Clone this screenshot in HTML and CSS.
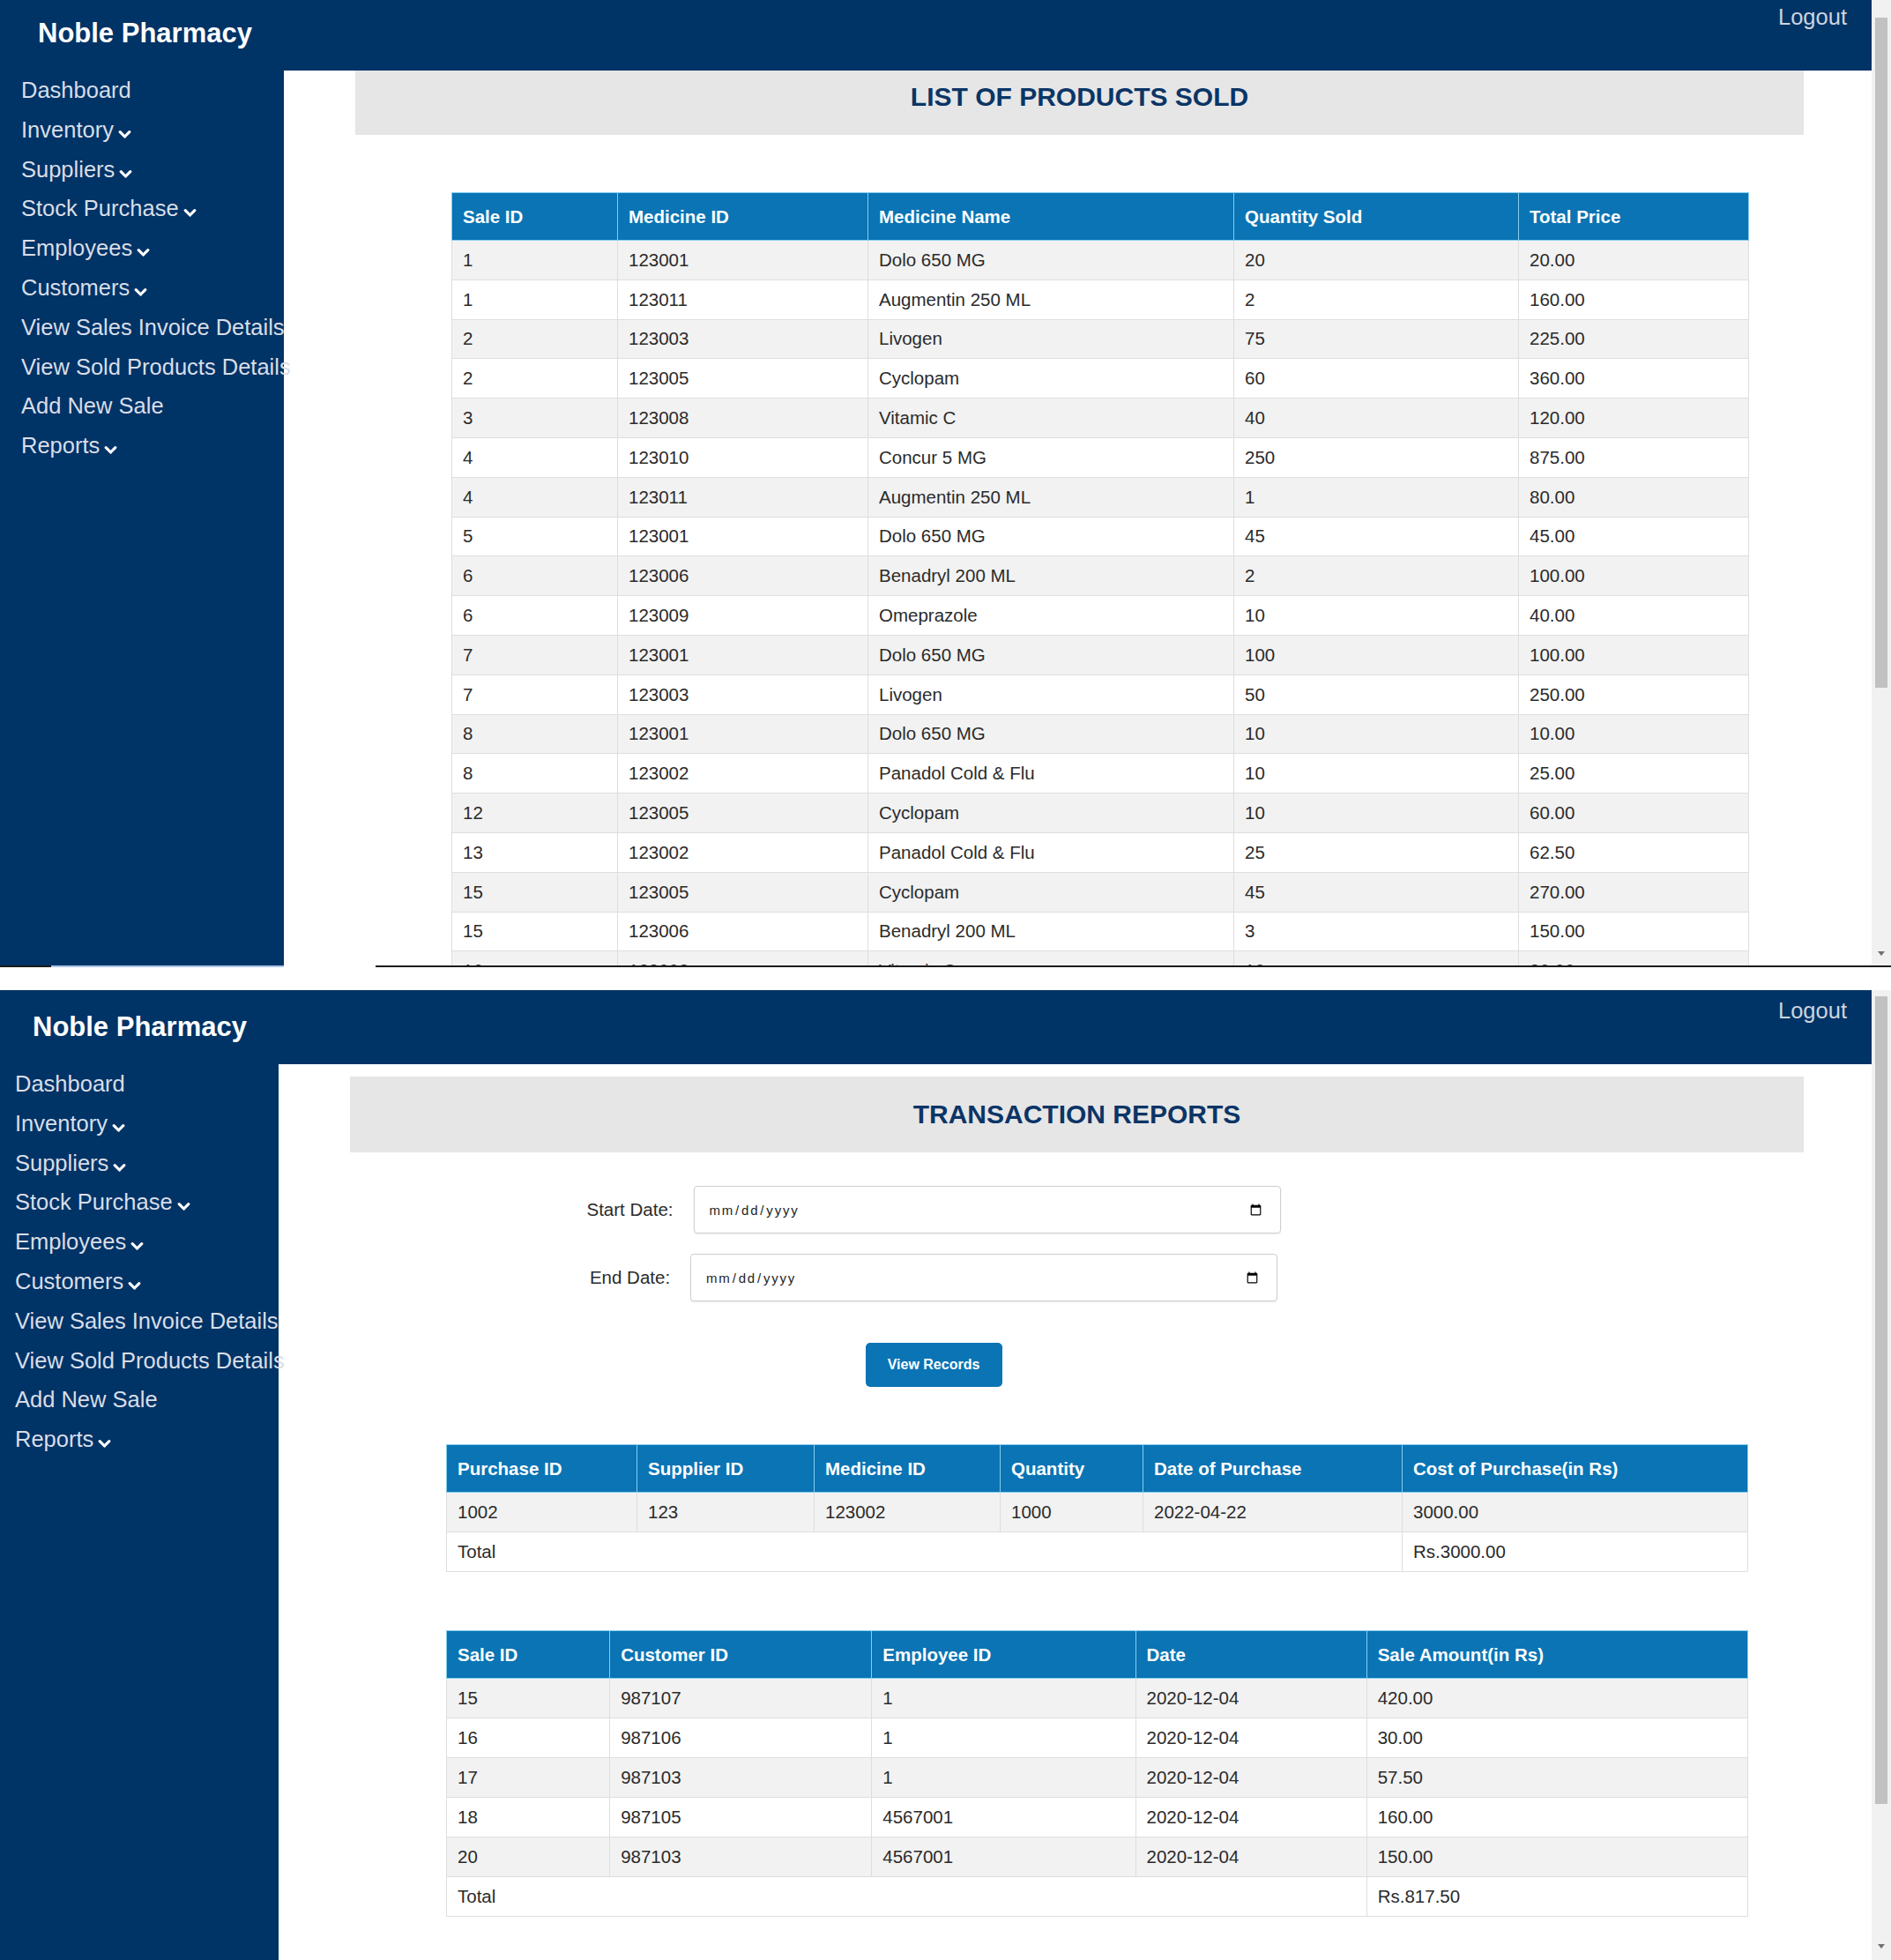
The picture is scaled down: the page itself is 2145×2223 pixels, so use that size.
FILE: index.html
```html
<!DOCTYPE html>
<html lang="en">
<head>
<meta charset="utf-8">
<title>Noble Pharmacy</title>
<link rel="stylesheet" href="styles.css">
</head>
<body>

<section class="shot shot-top">
  <div class="screen">
    <header class="topbar">
      <div class="brand">Noble Pharmacy</div>
      <a class="logout">Logout</a>
    </header>
    <div class="body">
      <nav class="sidebar">
        <a class="nav-item">Dashboard</a>
        <a class="nav-item">Inventory<svg class="chev" viewBox="0 0 15 11"><path d="M2.2 2.6 L7.5 8 L12.8 2.6"/></svg></a>
        <a class="nav-item">Suppliers<svg class="chev" viewBox="0 0 15 11"><path d="M2.2 2.6 L7.5 8 L12.8 2.6"/></svg></a>
        <a class="nav-item">Stock Purchase<svg class="chev" viewBox="0 0 15 11"><path d="M2.2 2.6 L7.5 8 L12.8 2.6"/></svg></a>
        <a class="nav-item">Employees<svg class="chev" viewBox="0 0 15 11"><path d="M2.2 2.6 L7.5 8 L12.8 2.6"/></svg></a>
        <a class="nav-item">Customers<svg class="chev" viewBox="0 0 15 11"><path d="M2.2 2.6 L7.5 8 L12.8 2.6"/></svg></a>
        <a class="nav-item">View Sales Invoice Details</a>
        <a class="nav-item">View Sold Products Details</a>
        <a class="nav-item">Add New Sale</a>
        <a class="nav-item">Reports<svg class="chev" viewBox="0 0 15 11"><path d="M2.2 2.6 L7.5 8 L12.8 2.6"/></svg></a>
      </nav>
      <main class="main">
        <div class="title-box">LIST OF PRODUCTS SOLD</div>
        <div class="tables">
          <table class="data t-sold">
            <colgroup><col><col><col><col><col></colgroup>
            <thead>
              <tr><th>Sale ID</th><th>Medicine ID</th><th>Medicine Name</th><th>Quantity Sold</th><th>Total Price</th></tr>
            </thead>
            <tbody>
              <tr><td>1</td><td>123001</td><td>Dolo 650 MG</td><td>20</td><td>20.00</td></tr>
              <tr><td>1</td><td>123011</td><td>Augmentin 250 ML</td><td>2</td><td>160.00</td></tr>
              <tr><td>2</td><td>123003</td><td>Livogen</td><td>75</td><td>225.00</td></tr>
              <tr><td>2</td><td>123005</td><td>Cyclopam</td><td>60</td><td>360.00</td></tr>
              <tr><td>3</td><td>123008</td><td>Vitamic C</td><td>40</td><td>120.00</td></tr>
              <tr><td>4</td><td>123010</td><td>Concur 5 MG</td><td>250</td><td>875.00</td></tr>
              <tr><td>4</td><td>123011</td><td>Augmentin 250 ML</td><td>1</td><td>80.00</td></tr>
              <tr><td>5</td><td>123001</td><td>Dolo 650 MG</td><td>45</td><td>45.00</td></tr>
              <tr><td>6</td><td>123006</td><td>Benadryl 200 ML</td><td>2</td><td>100.00</td></tr>
              <tr><td>6</td><td>123009</td><td>Omeprazole</td><td>10</td><td>40.00</td></tr>
              <tr><td>7</td><td>123001</td><td>Dolo 650 MG</td><td>100</td><td>100.00</td></tr>
              <tr><td>7</td><td>123003</td><td>Livogen</td><td>50</td><td>250.00</td></tr>
              <tr><td>8</td><td>123001</td><td>Dolo 650 MG</td><td>10</td><td>10.00</td></tr>
              <tr><td>8</td><td>123002</td><td>Panadol Cold &amp; Flu</td><td>10</td><td>25.00</td></tr>
              <tr><td>12</td><td>123005</td><td>Cyclopam</td><td>10</td><td>60.00</td></tr>
              <tr><td>13</td><td>123002</td><td>Panadol Cold &amp; Flu</td><td>25</td><td>62.50</td></tr>
              <tr><td>15</td><td>123005</td><td>Cyclopam</td><td>45</td><td>270.00</td></tr>
              <tr><td>15</td><td>123006</td><td>Benadryl 200 ML</td><td>3</td><td>150.00</td></tr>
              <tr><td>16</td><td>123008</td><td>Vitamic C</td><td>10</td><td>30.00</td></tr>
            </tbody>
          </table>
        </div>
      </main>
    </div>
  </div>
  <div class="scrollbar scrollbar-top">
    <div class="thumb"></div>
    <div class="arrow"></div>
  </div>
</section>

<div class="cut">
  <span class="seg seg-dark seg-left"></span>
  <span class="seg seg-light"></span>
  <span class="seg seg-blank"></span>
  <span class="seg seg-dark seg-fill"></span>
</div>
<div class="gap"></div>

<section class="shot shot-bottom">
  <div class="screen">
    <header class="topbar">
      <div class="brand">Noble Pharmacy</div>
      <a class="logout">Logout</a>
    </header>
    <div class="body">
      <nav class="sidebar">
        <a class="nav-item">Dashboard</a>
        <a class="nav-item">Inventory<svg class="chev" viewBox="0 0 15 11"><path d="M2.2 2.6 L7.5 8 L12.8 2.6"/></svg></a>
        <a class="nav-item">Suppliers<svg class="chev" viewBox="0 0 15 11"><path d="M2.2 2.6 L7.5 8 L12.8 2.6"/></svg></a>
        <a class="nav-item">Stock Purchase<svg class="chev" viewBox="0 0 15 11"><path d="M2.2 2.6 L7.5 8 L12.8 2.6"/></svg></a>
        <a class="nav-item">Employees<svg class="chev" viewBox="0 0 15 11"><path d="M2.2 2.6 L7.5 8 L12.8 2.6"/></svg></a>
        <a class="nav-item">Customers<svg class="chev" viewBox="0 0 15 11"><path d="M2.2 2.6 L7.5 8 L12.8 2.6"/></svg></a>
        <a class="nav-item">View Sales Invoice Details</a>
        <a class="nav-item">View Sold Products Details</a>
        <a class="nav-item">Add New Sale</a>
        <a class="nav-item">Reports<svg class="chev" viewBox="0 0 15 11"><path d="M2.2 2.6 L7.5 8 L12.8 2.6"/></svg></a>
      </nav>
      <main class="main">
        <div class="title-box">TRANSACTION REPORTS</div>
        <form class="filter">
          <div class="field">
            <label class="field-label" for="start">Start Date:</label>
            <input class="date-input" id="start" type="date">
          </div>
          <div class="field field-end">
            <label class="field-label" for="end">End Date:</label>
            <input class="date-input" id="end" type="date">
          </div>
          <button class="btn" type="button">View Records</button>
        </form>
        <div class="tables">
          <table class="data t-purchase">
            <colgroup><col><col><col><col><col><col></colgroup>
            <thead>
              <tr><th>Purchase ID</th><th>Supplier ID</th><th>Medicine ID</th><th>Quantity</th><th>Date of Purchase</th><th>Cost of Purchase(in Rs)</th></tr>
            </thead>
            <tbody>
              <tr><td>1002</td><td>123</td><td>123002</td><td>1000</td><td>2022-04-22</td><td>3000.00</td></tr>
              <tr><td colspan="5">Total</td><td>Rs.3000.00</td></tr>
            </tbody>
          </table>
          <table class="data t-sales">
            <colgroup><col><col><col><col><col></colgroup>
            <thead>
              <tr><th>Sale ID</th><th>Customer ID</th><th>Employee ID</th><th>Date</th><th>Sale Amount(in Rs)</th></tr>
            </thead>
            <tbody>
              <tr><td>15</td><td>987107</td><td>1</td><td>2020-12-04</td><td>420.00</td></tr>
              <tr><td>16</td><td>987106</td><td>1</td><td>2020-12-04</td><td>30.00</td></tr>
              <tr><td>17</td><td>987103</td><td>1</td><td>2020-12-04</td><td>57.50</td></tr>
              <tr><td>18</td><td>987105</td><td>4567001</td><td>2020-12-04</td><td>160.00</td></tr>
              <tr><td>20</td><td>987103</td><td>4567001</td><td>2020-12-04</td><td>150.00</td></tr>
              <tr><td colspan="4">Total</td><td>Rs.817.50</td></tr>
            </tbody>
          </table>
        </div>
      </main>
    </div>
  </div>
  <div class="scrollbar scrollbar-bottom">
    <div class="thumb"></div>
    <div class="arrow"></div>
  </div>
</section>

</body>
</html>
```

FILE: styles.css
```css
* { box-sizing: border-box; }

html, body { margin: 0; padding: 0; background: #fff; }
body {
  width: 2145px;
  font-family: "Liberation Sans", Arial, sans-serif;
  color: #2b2b2b;
}

/* ---------- screenshot frames ---------- */
.shot { display: flex; overflow: hidden; }
.shot-top { height: 1095px; }
.shot-bottom { height: 1100px; }

.screen { flex: 1; min-width: 0; display: flex; flex-direction: column; }

.cut { display: flex; height: 2px; }
.seg { display: block; height: 2px; }
.seg-dark { background: #1c1c1c; }
.seg-left { width: 58px; }
.seg-light { width: 264px; background: #a9c6e6; }
.seg-blank { width: 104px; }
.seg-fill { flex: 1; }
.gap { height: 26px; }

/* ---------- top bar ---------- */
.topbar {
  flex: none;
  background: #003366;
  display: flex;
  justify-content: space-between;
  align-items: flex-start;
}
.shot-top .topbar { height: 80px; }
.shot-bottom .topbar { height: 84px; }

.brand {
  color: #fff;
  font-weight: bold;
  font-size: 31px;
  line-height: 31px;
}
.shot-top .brand { padding: 22px 0 0 43px; }
.shot-bottom .brand { padding: 26px 0 0 37px; }

.logout {
  color: #cdd4de;
  font-size: 25.5px;
  line-height: 25.5px;
  padding-right: 28px;
}
.shot-top .logout { padding-top: 7px; }
.shot-bottom .logout { padding-top: 11px; }

/* ---------- body / sidebar ---------- */
.body { flex: 1; display: flex; min-height: 0; }

.sidebar {
  flex: none;
  background: #003366;
  display: flex;
  flex-direction: column;
}
.shot-top .sidebar { width: 322px; }
.shot-bottom .sidebar { width: 316px; }

.nav-item {
  display: block;
  white-space: nowrap;
  color: #d8dee8;
  font-size: 25.5px;
  line-height: 44.8px;
  height: 44.8px;
}
.shot-top .nav-item { padding-left: 24px; }
.shot-bottom .nav-item { padding-left: 17px; }

.chev {
  width: 15px;
  height: 11px;
  margin-left: 5px;
  vertical-align: -2px;
}
.chev path {
  fill: none;
  stroke: #fff;
  stroke-width: 3.2;
  stroke-linecap: round;
  stroke-linejoin: round;
}

/* ---------- main ---------- */
.main {
  flex: 1;
  min-width: 0;
  overflow: hidden;
  padding: 0 77px 0 81px;
}

.title-box {
  height: 86px;
  background: #e6e6e6;
  display: flex;
  align-items: center;
  justify-content: center;
  color: #0b3566;
  font-weight: bold;
  font-size: 30px;
}
.shot-top .title-box { margin-top: -13px; }
.shot-bottom .title-box { margin-top: 14px; }

.tables { padding: 0 63px 0 109px; }

/* ---------- tables ---------- */
.data {
  width: 100%;
  table-layout: fixed;
  border-collapse: collapse;
  font-size: 20.5px;
  color: #2b2b2b;
}
.data th {
  height: 54px;
  padding: 0 12px;
  background: #0a74b4;
  color: #fff;
  font-weight: bold;
  text-align: left;
  border: 1px solid #86cdee;
  white-space: nowrap;
}
.data td {
  height: 45px;
  padding: 0 12px;
  border: 1px solid #dedede;
  white-space: nowrap;
}
.data tbody tr:nth-child(odd) { background: #f2f2f2; }
.data tbody tr:nth-child(even) { background: #fff; }

.t-sold { margin-top: 65px; }
.t-sold td { height: 44.8px; }
.t-sold col:nth-child(1) { width: 188px; }
.t-sold col:nth-child(2) { width: 284px; }
.t-sold col:nth-child(3) { width: 415px; }
.t-sold col:nth-child(4) { width: 323px; }
.t-sold col:nth-child(5) { width: 261px; }

.t-purchase { margin-top: 65px; }
.t-purchase col:nth-child(1) { width: 216px; }
.t-purchase col:nth-child(2) { width: 201px; }
.t-purchase col:nth-child(3) { width: 211px; }
.t-purchase col:nth-child(4) { width: 162px; }
.t-purchase col:nth-child(5) { width: 294px; }
.t-purchase col:nth-child(6) { width: 392px; }

.t-sales { margin-top: 66px; }
.t-sales col:nth-child(1) { width: 185px; }
.t-sales col:nth-child(2) { width: 297px; }
.t-sales col:nth-child(3) { width: 299px; }
.t-sales col:nth-child(4) { width: 262px; }
.t-sales col:nth-child(5) { width: 432px; }

/* ---------- filter form ---------- */
.filter {
  margin: 38px 0 0 0;
  padding-right: 325px;
  display: flex;
  flex-direction: column;
  align-items: center;
}
.field { display: flex; align-items: center; gap: 23px; }
.field-end { margin-top: 23px; }
.field-label { font-size: 20.5px; color: #2b2b2b; }

.date-input {
  width: 666px;
  height: 54px;
  padding: 0 18px 0 16px;
  border: 1px solid #cfcfcf;
  border-radius: 4px;
  box-shadow: 0 1px 2px rgba(0, 0, 0, 0.08);
  background: #fff;
  font-family: "Liberation Sans", Arial, sans-serif;
  font-size: 15px;
  letter-spacing: 1.8px;
  color: #1e1e1e;
}

.btn {
  margin-top: 47px;
  width: 155px;
  height: 50px;
  border: none;
  border-radius: 5px;
  background: #0a74b4;
  color: #fff;
  font-family: "Liberation Sans", Arial, sans-serif;
  font-weight: bold;
  font-size: 16px;
}

/* ---------- scrollbars ---------- */
.scrollbar {
  flex: none;
  width: 22px;
  background: #f1f1f1;
  display: flex;
  flex-direction: column;
  align-items: center;
}
.thumb { width: 14px; background: #c1c1c1; }
.scrollbar-top { padding-top: 20px; }
.scrollbar-top .thumb { height: 760px; }
.scrollbar-bottom { padding-top: 7px; }
.scrollbar-bottom .thumb { height: 916px; }

.arrow {
  margin-top: auto;
  width: 0;
  height: 0;
  border-left: 4px solid transparent;
  border-right: 4px solid transparent;
  border-top: 5px solid #707070;
}
.scrollbar-top .arrow { margin-bottom: 11px; }
.scrollbar-bottom .arrow { margin-bottom: 13px; }
```
